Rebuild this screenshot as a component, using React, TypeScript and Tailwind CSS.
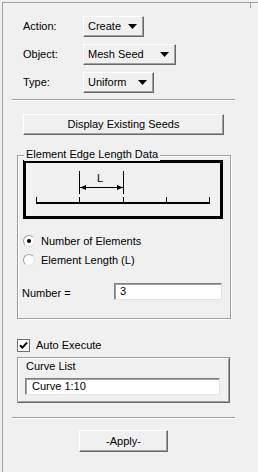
import React from 'react';

const raised =
  'bg-[#f0f0f0] border border-t-white border-l-white border-r-[#696969] border-b-[#696969] shadow-[inset_-1px_-1px_0_#a0a0a0]';
const sunken =
  'bg-white border border-t-[#808080] border-l-[#808080] border-r-[#e3e3e3] border-b-[#e3e3e3] shadow-[inset_1px_1px_0_#a0a0a0]';

const Caret = () => (
  <svg width="9" height="5" viewBox="0 0 9 5">
    <path d="M0 0h9L4.5 5z" fill="#000" />
  </svg>
);

const DropRow: React.FC<{ label: string; value: string; width: string; first?: boolean }> = ({ label, value, width, first }) => (
  <div className={`flex items-center h-[21px] pl-[20px] ${first ? 'mt-[13px]' : 'mt-[7px]'}`}>
    <span className="w-[60px]">{label}</span>
    <div className={`${raised} ${width} h-[21px] flex items-center justify-between pl-[4px] pr-[6px]`}>
      <span>{value}</span>
      <Caret />
    </div>
  </div>
);

const Separator: React.FC<{ className?: string }> = ({ className = '' }) => (
  <div className={`ml-[9px] w-[223px] border-t border-t-[#a0a0a0] border-b border-b-white ${className}`} />
);

const Radio: React.FC<{ checked?: boolean; label: string; className?: string }> = ({ checked, label, className = '' }) => (
  <div className={`flex items-center h-[16px] ml-[5px] ${className}`}>
    <div className="w-[12px] h-[12px] rounded-full bg-white border border-t-[#a0a0a0] border-l-[#a0a0a0] border-r-[#e3e3e3] border-b-[#e3e3e3] flex items-center justify-center">
      {checked && <div className="w-[4px] h-[4px] rounded-full bg-black" />}
    </div>
    <span className="ml-[6px]">{label}</span>
  </div>
);

const Diagram = () => (
  <svg width="194" height="53" viewBox="0 0 194 53">
    <rect x="10" y="39" width="174" height="2" fill="#000" />
    <rect x="10" y="34" width="1" height="6" fill="#000" />
    <rect x="53" y="34" width="1" height="6" fill="#000" />
    <rect x="97" y="34" width="1" height="6" fill="#000" />
    <rect x="140" y="34" width="1" height="6" fill="#000" />
    <rect x="183" y="34" width="1" height="6" fill="#000" />
    <rect x="53" y="8" width="1" height="23" fill="#000" />
    <rect x="97" y="8" width="1" height="23" fill="#000" />
    <rect x="54" y="24" width="43" height="1" fill="#000" />
    <path d="M54 24.5L60 22v5z" fill="#000" />
    <path d="M97 24.5L91 22v5z" fill="#000" />
    <text x="74" y="19" fontSize="11" textAnchor="middle" fontFamily="Liberation Sans, Arial, sans-serif" fill="#000">
      L
    </text>
  </svg>
);

export default function App() {
  return (
    <div className="w-[258px] h-[472px] bg-[#f0f0f0] pt-[2px] pl-[2px] text-[11px] leading-[13px] text-black font-['Liberation_Sans',Arial,sans-serif] overflow-hidden">
      <div className="relative h-full border-l border-t border-[#a0a0a0] flex flex-col">
        <div className="absolute left-[247px] -top-[1px] w-[1px] h-[6px] bg-[#a0a0a0]" />

        <DropRow first label="Action:" value="Create" width="w-[61px]" />
        <DropRow label="Object:" value="Mesh Seed" width="w-[93px]" />
        <DropRow label="Type:" value="Uniform" width="w-[71px]" />

        <Separator className="mt-[6px]" />

        <div className={`${raised} mt-[13px] ml-[20px] w-[201px] h-[21px] flex items-center justify-center`}>
          Display Existing Seeds
        </div>

        <div className="relative mt-[20px] ml-[14px] w-[214px] h-[164px] border border-[#a0a0a0] shadow-[1px_1px_0_#fff,inset_1px_1px_0_#fff] flex flex-col">
          <span className="absolute left-[6px] -top-[8px] px-[2px] bg-[#f0f0f0]">Element Edge Length Data</span>
          <div className="mt-[4px] ml-[5px] w-[200px] h-[59px] border-[3px] border-black">
            <Diagram />
          </div>
          <Radio checked label="Number of Elements" className="mt-[14px]" />
          <Radio label="Element Length (L)" className="mt-[3px]" />
          <div className="mt-[15px] ml-[4px] h-[17px] flex items-center">
            <span className="w-[92px] mt-[4px]">Number =</span>
            <div className={`${sunken} w-[108px] h-[17px] flex items-center pl-[5px]`}>3</div>
          </div>
        </div>

        <div className="mt-[20px] ml-[14px] h-[13px] flex items-center">
          <div className="w-[13px] h-[13px] bg-white border border-[#707070] flex items-center justify-center">
            <svg width="9" height="9" viewBox="0 0 9 9">
              <path d="M1 4.2L3.4 6.6L8 1.6" stroke="#000" strokeWidth="2" fill="none" />
            </svg>
          </div>
          <span className="ml-[6px]">Auto Execute</span>
        </div>

        <div className="mt-[5px] ml-[14px] w-[213px] h-[46px] border border-t-[#a0a0a0] border-l-[#a0a0a0] border-r-[#696969] border-b-[#696969]">
          <div className="h-full border border-t-white border-l-white border-r-[#a0a0a0] border-b-[#a0a0a0] flex flex-col">
            <span className="mt-[1px] ml-[7px] h-[13px]">Curve List</span>
            <div className={`${sunken} mt-[5px] ml-[6px] w-[195px] h-[17px] flex items-center pl-[6px]`}>Curve 1:10</div>
          </div>
        </div>

        <Separator className="mt-[14px]" />

        <div className={`${raised} mt-[11px] ml-[76px] w-[89px] h-[22px] flex items-center justify-center`}>-Apply-</div>
      </div>
    </div>
  );
}
